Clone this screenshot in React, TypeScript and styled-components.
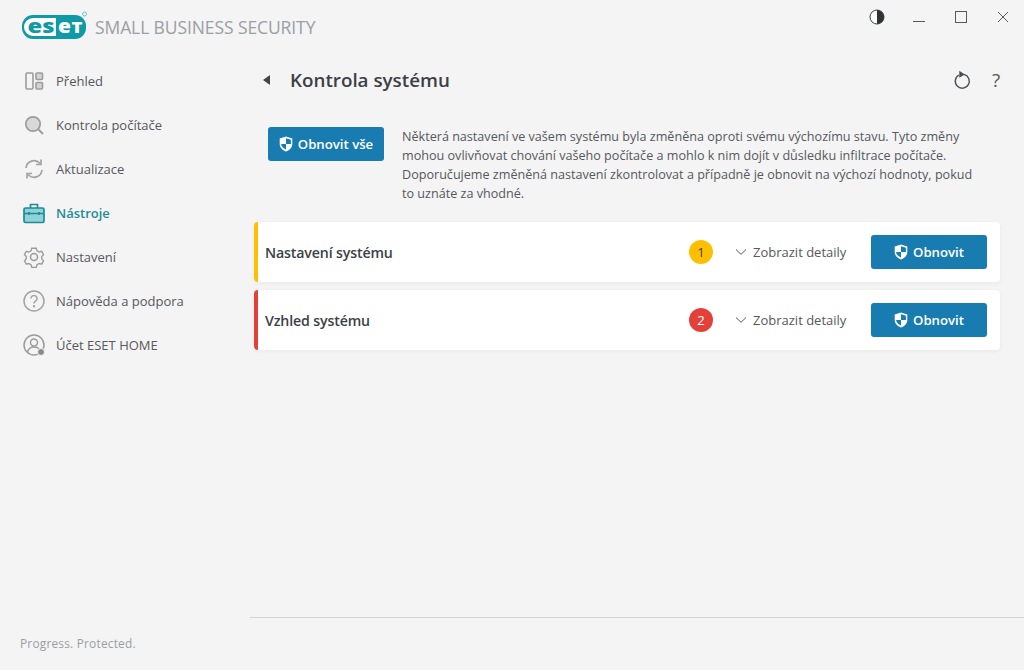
import { createGlobalStyle, styled } from 'styled-components'
import type { ReactNode } from 'react'

const GlobalStyle = createGlobalStyle`
  html, body {
    margin: 0;
    padding: 0;
    background: #f4f4f4;
  }
  body {
    font-family: "Open Sans", "Noto Sans", "Liberation Sans", sans-serif;
    color: #3b3f46;
  }
`

const Shell = styled.div`
  width: 1024px;
  height: 670px;
  display: grid;
  grid-template-columns: 250px 774px;
  grid-template-rows: 50px 620px;
  overflow: hidden;
`

const Brand = styled.div`
  display: flex;
  align-items: center;
  gap: 7px;
  padding: 4px 0 0 22px;
  white-space: nowrap;
`

const LogoMark = styled.svg`
  width: 66px;
  height: 28px;
  flex: none;
  margin-top: -4px;
`

const ProductName = styled.span`
  font-size: 17.5px;
  letter-spacing: -0.1px;
  color: #9a9fa5;
`

const WindowBar = styled.div`
  display: flex;
  justify-content: flex-end;
  align-items: flex-start;
  padding-top: 8px;
`

const WindowButton = styled.div`
  width: 42px;
  height: 18px;
  display: flex;
  align-items: center;
  justify-content: center;
  color: #3b3f46;
`

const Sidebar = styled.nav`
  display: flex;
  flex-direction: column;
  justify-content: space-between;
  padding-top: 9px;
`

const NavList = styled.div`
  display: flex;
  flex-direction: column;
`

const NavItem = styled.div<{ $active?: boolean }>`
  height: 44px;
  display: flex;
  align-items: center;
  gap: 11px;
  padding-left: 23px;
  font-size: 13px;
  font-weight: ${({ $active }) => ($active ? 600 : 400)};
  color: ${({ $active }) => ($active ? '#1f8b96' : '#55585d')};
`

const NavIcon = styled.svg`
  width: 22px;
  height: 22px;
  flex: none;
`

const Slogan = styled.div`
  padding: 0 0 19px 20px;
  font-size: 11.9px;
  letter-spacing: 0.2px;
  color: #999ea3;
`

const Main = styled.main`
  display: flex;
  flex-direction: column;
  padding-right: 24px;
  position: relative;
`

const Header = styled.header`
  height: 60px;
  display: flex;
  align-items: center;
  padding-left: 13px;
  margin-right: -3px;
`

const BackArrow = styled.span`
  width: 0;
  height: 0;
  border-top: 5px solid transparent;
  border-bottom: 5px solid transparent;
  border-right: 7px solid #3b4650;
  margin-right: 20px;
`

const Title = styled.h1`
  flex: 1;
  margin: 0;
  font-size: 18.8px;
  font-weight: 600;
  color: #3b3f46;
`

const HeaderTools = styled.div`
  display: flex;
  align-items: center;
  gap: 18px;
  color: #4a4f55;
`

const HelpMark = styled.span`
  font-size: 19px;
  line-height: 1;
  width: 14px;
  text-align: center;
  color: #565b61;
`

const Intro = styled.section`
  display: flex;
  align-items: flex-start;
  padding: 17px 0 0 18px;
  gap: 18px;
`

const IntroText = styled.p`
  margin: 0;
  width: 580px;
  font-size: 12.6px;
  line-height: 19px;
  color: #55585d;
`

const RestoreButton = styled.button`
  width: 116px;
  height: 34px;
  flex: none;
  border: 0;
  border-radius: 3px;
  background: #187cb0;
  color: #fff;
  font: 600 13.2px "Open Sans", "Noto Sans", sans-serif;
  display: flex;
  align-items: center;
  justify-content: center;
  gap: 5px;
  padding: 0;
`

const CardList = styled.div`
  display: flex;
  flex-direction: column;
  gap: 8px;
  padding: 19px 0 0 4px;
`

const Card = styled.article<{ $accent: string }>`
  height: 60px;
  display: flex;
  align-items: center;
  padding: 0 13px 0 7px;
  background: #fff;
  border-left: 4px solid ${({ $accent }) => $accent};
  border-radius: 4px;
  box-shadow: 0 1px 4px rgba(0, 0, 0, 0.05);
`

const CardTitle = styled.h2`
  flex: 1;
  margin: 0;
  font-size: 14.2px;
  font-weight: 600;
  letter-spacing: -0.15px;
  color: #3b3f46;
`

const CountBadge = styled.span<{ $bg: string; $fg: string }>`
  width: 24px;
  height: 24px;
  border-radius: 50%;
  background: ${({ $bg }) => $bg};
  color: ${({ $fg }) => $fg};
  font-size: 13px;
  display: flex;
  align-items: center;
  justify-content: center;
  margin-right: 22px;
`

const DetailsToggle = styled.span`
  display: flex;
  align-items: center;
  gap: 6px;
  width: 136px;
  font-size: 13px;
  color: #55585d;
`

const Divider = styled.div`
  position: absolute;
  left: 0;
  right: 0;
  bottom: 52px;
  height: 1px;
  background: #d4d4d4;
`

const ShieldIcon = () => (
  <svg width="14" height="16" viewBox="0 0 14 16">
    <path d="M7 .5 13.3 2.6V8c0 3.6-2.6 6-6.3 7.5C3.300 14 .7 11.600.7 8V2.600Z" fill="#fff" />
    <path d="M7 2.300V8H2.100c.2 2.500 2.200 4.300 4.900 5.500V8h4.900V3.700Z" fill="#187cb0" />
  </svg>
)

const Chevron = () => (
  <svg width="12" height="8" viewBox="0 0 12 8" fill="none" stroke="#55585d" strokeWidth="1">
    <path d="M1 1.500 6 6.300 11 1.500" />
  </svg>
)

const logoFont = "'Open Sans', sans-serif"

const EsetLogo = () => (
  <LogoMark viewBox="0 0 66 28">
    <rect x="0" y="4" width="64" height="24" rx="11" fill="#0f9aa5" />
    <path d="M11 7H34V25H11A9 9 0 0 1 11 7Z" fill="#fff" />
    <text x="5.500" y="21.500" fontFamily={logoFont} fontWeight="800" fontSize="20" fill="#0f9aa5" textLength="27" lengthAdjust="spacingAndGlyphs">es</text>
    <text x="36" y="21.500" fontFamily={logoFont} fontWeight="800" fontSize="20" fill="#fff" textLength="13" lengthAdjust="spacingAndGlyphs">e</text>
    <text x="49.500" y="21.500" fontFamily={logoFont} fontWeight="800" fontSize="15" fill="#fff" textLength="11" lengthAdjust="spacingAndGlyphs">T</text>
    <circle cx="62.500" cy="3" r="2" fill="none" stroke="#4fb5bd" strokeWidth="0.8" />
  </LogoMark>
)

const navEntries: { label: string; active?: boolean; icon: ReactNode }[] = [
  {
    label: 'Přehled',
    icon: (
      <g fill="none" stroke="#9c9c9c" strokeWidth="1.6">
        <rect x="3" y="3" width="7" height="16" rx="1" />
        <rect x="13" y="3" width="6.500" height="6.500" rx="1" fill="#d4d4d4" />
        <rect x="13" y="12.500" width="6.500" height="6.500" rx="1" fill="#d4d4d4" />
      </g>
    ),
  },
  {
    label: 'Kontrola počítače',
    icon: (
      <g fill="none" stroke="#9c9c9c" strokeWidth="1.700">
        <circle cx="10" cy="10" r="7.200" fill="#d8d8d8" />
        <path d="M15.500 15.500 20 20" strokeWidth="2" />
      </g>
    ),
  },
  {
    label: 'Aktualizace',
    icon: (
      <g fill="none" stroke="#a3a3a3" strokeWidth="1.700">
        <path d="M3 10a8 8 0 0 1 14-4.500" />
        <path d="M19 12a8 8 0 0 1-14 4.500" />
        <path d="M18 1.500V6.500H13" />
        <path d="M4 20.500V15.500H9" />
      </g>
    ),
  },
  {
    label: 'Nástroje',
    active: true,
    icon: (
      <g stroke="#1f8b96" strokeWidth="1.700">
        <rect x="1" y="6" width="20" height="14.500" rx="1.500" fill="#8fd2d8" />
        <path d="M7.500 6V2.500h7V6M1 11.500h20" fill="none" />
        <path d="M6 10v3M16 10v3" fill="none" />
      </g>
    ),
  },
  {
    label: 'Nastavení',
    icon: (
      <g fill="none" stroke="#9c9c9c" strokeWidth="1.500">
        <path d="M8.500 1.800h5l.8 2.800 2.500 1.400 2.800-.7 2 3.700-2 2 0 2.800 0 0 2 2-2 3.700-2.800-.7-2.500 1.400-.8 2.800h-5l-.8-2.800-2.500-1.400-2.800.7-2-3.700 2-2V11l-2-2 2-3.700 2.800.7 2.500-1.400Z" transform="translate(1.100 .6) scale(.9)" />
        <circle cx="11" cy="11" r="3.500" />
      </g>
    ),
  },
  {
    label: 'Nápověda a podpora',
    icon: (
      <g fill="none" stroke="#a3a3a3" strokeWidth="1.500">
        <circle cx="11" cy="11" r="10" />
        <path d="M8 8.500a3 3 0 1 1 4.500 2.600c-1 .6-1.500 1.200-1.500 2.400" />
        <circle cx="11" cy="16.300" r=".5" fill="#a3a3a3" />
      </g>
    ),
  },
  {
    label: 'Účet ESET HOME',
    icon: (
      <g fill="none" stroke="#9c9c9c" strokeWidth="1.500">
        <circle cx="11" cy="11" r="10" />
        <circle cx="11" cy="8.500" r="3.500" />
        <path d="M4.500 18c.8-3.200 3.300-5 6.500-5s5.700 1.800 6.500 5" />
        <circle cx="18" cy="18" r="3.500" fill="#8a8a8a" stroke="#f4f4f4" strokeWidth="1" />
      </g>
    ),
  },
]

const cards = [
  { title: 'Nastavení systému', accent: '#fcc000', count: 1, fg: '#3b3f46' },
  { title: 'Vzhled systému', accent: '#e3403a', count: 2, fg: '#fff' },
]

export default function App() {
  return (
    <Shell>
      <GlobalStyle />
      <Brand>
        <EsetLogo />
        <ProductName>SMALL BUSINESS SECURITY</ProductName>
      </Brand>
      <WindowBar>
        <WindowButton>
          <svg width="16" height="16" viewBox="0 0 16 16">
            <circle cx="8" cy="8" r="7" fill="#fff" stroke="#3b3f46" strokeWidth="1" />
            <path d="M8 1a7 7 0 0 1 0 14Z" fill="#2f3338" />
          </svg>
        </WindowButton>
        <WindowButton>
          <svg width="12" height="16" viewBox="0 0 12 16" fill="none" stroke="#55585d">
            <path d="M0 12.500H12" />
          </svg>
        </WindowButton>
        <WindowButton>
          <svg width="12" height="12" viewBox="0 0 12 12" fill="none" stroke="#55585d">
            <rect x=".5" y=".5" width="11" height="11" />
          </svg>
        </WindowButton>
        <WindowButton>
          <svg width="12" height="12" viewBox="0 0 12 12" fill="none" stroke="#55585d">
            <path d="M1 1 11 11M11 1 1 11" />
          </svg>
        </WindowButton>
      </WindowBar>
      <Sidebar>
        <NavList>
          {navEntries.map((entry) => (
            <NavItem key={entry.label} $active={entry.active}>
              <NavIcon viewBox="0 0 22 22">{entry.icon}</NavIcon>
              {entry.label}
            </NavItem>
          ))}
        </NavList>
        <Slogan>Progress. Protected.</Slogan>
      </Sidebar>
      <Main>
        <Header>
          <BackArrow />
          <Title>Kontrola systému</Title>
          <HeaderTools>
            <svg width="18" height="20" viewBox="0 0 18 20" fill="none" stroke="#4a4f55" strokeWidth="1.400">
              <path d="M6 5a7 7 0 1 0 5-.6" />
              <path d="M7 2 10.500 4.500 7 6.500Z" fill="#4a4f55" />
            </svg>
            <HelpMark>?</HelpMark>
          </HeaderTools>
        </Header>
        <Intro>
          <RestoreButton>
            <ShieldIcon />
            Obnovit vše
          </RestoreButton>
          <IntroText>
            Některá nastavení ve vašem systému byla změněna oproti svému výchozímu stavu. Tyto změny mohou ovlivňovat chování vašeho počítače a mohlo k nim dojít v důsledku infiltrace počítače. Doporučujeme změněná nastavení zkontrolovat a případně je obnovit na výchozí hodnoty, pokud to uznáte za vhodné.
          </IntroText>
        </Intro>
        <CardList>
          {cards.map((card) => (
            <Card key={card.title} $accent={card.accent}>
              <CardTitle>{card.title}</CardTitle>
              <CountBadge $bg={card.accent} $fg={card.fg}>{card.count}</CountBadge>
              <DetailsToggle>
                <Chevron />
                Zobrazit detaily
              </DetailsToggle>
              <RestoreButton>
                <ShieldIcon />
                Obnovit
              </RestoreButton>
            </Card>
          ))}
        </CardList>
        <Divider />
      </Main>
    </Shell>
  )
}
